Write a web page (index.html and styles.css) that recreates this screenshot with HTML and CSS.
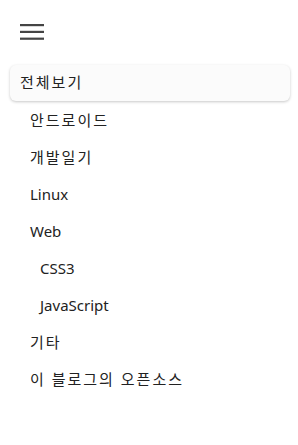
FILE: index.html
```html
<!DOCTYPE html>
<html lang="ko">
<head>
  <meta charset="UTF-8">
  <title>카테고리</title>
  <link rel="stylesheet" href="styles.css">
</head>
<body>

  <header class="topbar">
    <button class="menu-btn" aria-label="메뉴">
      <svg width="24" height="16" viewBox="0 0 24 16">
        <rect x="0" y="0" width="24" height="2.2" fill="#444"></rect>
        <rect x="0" y="6.8" width="24" height="2.2" fill="#444"></rect>
        <rect x="0" y="13.6" width="24" height="2.2" fill="#444"></rect>
      </svg>
    </button>
  </header>

  <nav class="category-nav">
    <ul>
      <li><a class="active ko" href="#">전체보기</a></li>
      <li><a class="ko" href="#">안드로이드</a></li>
      <li><a class="ko" href="#">개발일기</a></li>
      <li><a href="#">Linux</a></li>
      <li><a href="#">Web</a></li>
      <li><a class="sub" href="#">CSS3</a></li>
      <li><a class="sub" href="#">JavaScript</a></li>
      <li><a class="ko" href="#">기타</a></li>
      <li><a class="ko" href="#">이 블로그의 오픈소스</a></li>
    </ul>
  </nav>

</body>
</html>
```
FILE: styles.css
```css
body {
  margin: 0;
  background: white;
  font-family: "Noto Sans", "Noto Sans CJK KR", sans-serif;
  font-size: 15px;
  color: #222;
}

.topbar {
  height: 65px;
  padding: 24px 0 0 20px;
  box-sizing: border-box;
}

.menu-btn {
  display: block;
  padding: 0;
  border: none;
  background: none;
  cursor: pointer;
}

.menu-btn svg {
  display: block;
}

.category-nav ul {
  list-style: none;
  margin: 0;
  padding: 0 8px 0 10px;
}

.category-nav a {
  display: block;
  height: 37px;
  line-height: 37px;
  padding-left: 20px;
  color: #222;
  text-decoration: none;
}

/* hangul in the reference font runs wider */
.category-nav a.ko {
  letter-spacing: 2px;
}

.category-nav a.sub {
  padding-left: 30px;
}

.category-nav a.active {
  height: 36px;
  line-height: 34px;
  margin-bottom: 1px;
  padding-left: 10px;
  background: #fbfbfb;
  border-radius: 6px;
  box-shadow: 0 1px 3px rgba(0,0,0,0.22);
}
```
